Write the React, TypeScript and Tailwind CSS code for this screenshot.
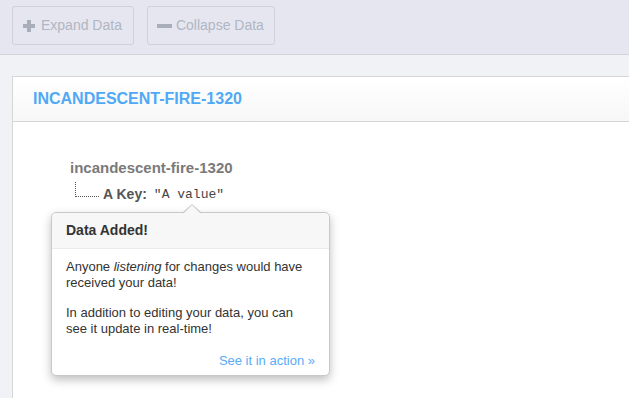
import React from "react";

export default function App() {
  const font = { fontFamily: '"Liberation Sans", Arial, Helvetica, sans-serif' };
  return (
    <div className="relative h-[398px] w-[629px] overflow-hidden bg-[#f1f2f6]" style={font}>
      <div className="flex h-[55px] items-start gap-[13px] border-b border-[#d3d3dc] bg-[#e6e6f0] pl-[12px] pt-[6px]">
        <button className="flex h-[39px] items-center gap-[6px] rounded-[3px] border border-[#cfd0d9] bg-[#e6e6f0] pl-[10px] pr-[11px] text-[14px] text-[#b0b6c3]">
          <svg width="12" height="12" viewBox="0 0 12 12" className="mt-[1px]">
            <path d="M4 0h4v4h4v4H8v4H4V8H0V4h4z" fill="#a8aeba" />
          </svg>
          <span>Expand Data</span>
        </button>
        <button className="flex h-[39px] items-center gap-[4px] rounded-[3px] border border-[#cfd0d9] bg-[#e6e6f0] pl-[9px] pr-[10px] text-[14px] text-[#b0b6c3]">
          <svg width="15" height="12" viewBox="0 0 15 12" className="mt-[1px]">
            <path d="M0 4h15v4H0z" fill="#a8aeba" />
          </svg>
          <span>Collapse Data</span>
        </button>
      </div>
      <div className="ml-[12px] mt-[21px] w-[640px] border border-[#d6d6d6] bg-white">
        <div className="flex h-[45px] items-center border-b border-[#d6d6d6] bg-gradient-to-b from-white to-[#f7f7f7] pl-[20px]">
          <span className="text-[16px] font-bold text-[#50a9f6]">INCANDESCENT-FIRE-1320</span>
        </div>
        <div className="h-[300px] pl-[57px] pt-[37px]">
          <div className="text-[15px] font-bold leading-[18px] text-[#7a7a7a]">incandescent-fire-1320</div>
          <div className="flex items-start">
            <div className="ml-[5px] mt-[5px] h-[15px] w-[24px] border-b border-l border-dotted border-[#555]" />
            <span className="ml-[4px] mt-[8px] text-[14px] font-bold leading-[18px] text-[#555]">A Key:</span>
            <span
              className="ml-[7px] mt-[9px] text-[13px] leading-[18px] text-[#444]"
              style={{ fontFamily: '"Liberation Mono", "Courier New", monospace' }}
            >
              "A value"
            </span>
          </div>
        </div>
      </div>

      <div className="absolute left-[51px] top-[212px] w-[279px] rounded-[5px] border border-[#c8c8c8] bg-white shadow-[0_4px_10px_rgba(0,0,0,0.25)]">
        <div className="absolute left-[130px] top-[-9px] h-0 w-0 border-b-[9px] border-l-[10px] border-r-[10px] border-b-[#c8c8c8] border-l-transparent border-r-transparent" />
        <div className="absolute left-[131px] top-[-8px] h-0 w-0 border-b-[9px] border-l-[9px] border-r-[9px] border-b-[#f7f7f7] border-l-transparent border-r-transparent" />
        <div className="flex h-[36px] items-center rounded-t-[5px] border-b border-[#ebebeb] bg-[#f7f7f7] pl-[14px] text-[14px] font-bold text-[#333]">
          Data Added!
        </div>
        <div className="px-[14px] pt-[10px] pb-[6px] text-[13px] leading-[16px] text-[#333]">
          <p>
            <span>Anyone </span>
            <span className="italic">listening</span>
            <span> for changes would have</span>
            <br />
            <span>received your data!</span>
          </p>
          <p className="mt-[14px]">
            <span>In addition to editing your data, you can</span>
            <br />
            <span>see it update in real-time!</span>
          </p>
          <p className="mt-[16px] text-right text-[#5aabf7]">See it in action »</p>
        </div>
      </div>
    </div>
  );
}
